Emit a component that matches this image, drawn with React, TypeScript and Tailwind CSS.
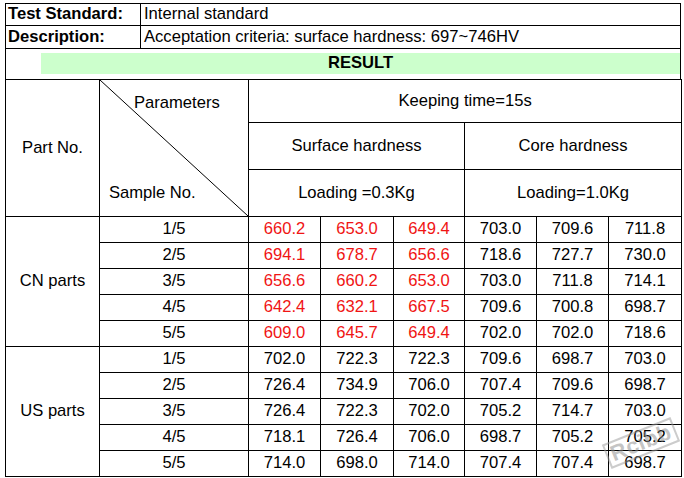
const CN = [
  { s: "1/5", surf: ["660.2", "653.0", "649.4"], core: ["703.0", "709.6", "711.8"] },
  { s: "2/5", surf: ["694.1", "678.7", "656.6"], core: ["718.6", "727.7", "730.0"] },
  { s: "3/5", surf: ["656.6", "660.2", "653.0"], core: ["703.0", "711.8", "714.1"] },
  { s: "4/5", surf: ["642.4", "632.1", "667.5"], core: ["709.6", "700.8", "698.7"] },
  { s: "5/5", surf: ["609.0", "645.7", "649.4"], core: ["702.0", "702.0", "718.6"] },
];

const US = [
  { s: "1/5", surf: ["702.0", "722.3", "722.3"], core: ["709.6", "698.7", "703.0"] },
  { s: "2/5", surf: ["726.4", "734.9", "706.0"], core: ["707.4", "709.6", "698.7"] },
  { s: "3/5", surf: ["726.4", "722.3", "702.0"], core: ["705.2", "714.7", "703.0"] },
  { s: "4/5", surf: ["718.1", "726.4", "706.0"], core: ["698.7", "705.2", "705.2"] },
  { s: "5/5", surf: ["714.0", "698.0", "714.0"], core: ["707.4", "707.4", "698.7"] },
];

const td = "border border-black text-center p-0";

function Group({ name, rows, red }: { name: string; rows: typeof CN; red: boolean }) {
  return (
    <>
      {rows.map((r, i) => (
        <tr key={r.s} className="h-[26px]">
          {i === 0 && (
            <td rowSpan={5} className={td}>
              {name}
            </td>
          )}
          <td className={td}>{r.s}</td>
          {r.surf.map((v, j) => (
            <td key={"s" + j} className={`${td} ${red ? "text-[#f01414]" : ""}`}>
              {v}
            </td>
          ))}
          {r.core.map((v, j) => (
            <td key={"c" + j} className={td}>
              {v}
            </td>
          ))}
        </tr>
      ))}
    </>
  );
}

export default function App() {
  return (
    <div
      className="relative w-[684px] h-[478px] bg-white text-black text-[16.6px] leading-none overflow-hidden"
      style={{ fontFamily: '"Liberation Sans", Arial, sans-serif' }}
    >
      <div className="ml-[5px] pt-[3px] w-[676px]">
        {/* header info */}
        <div className="border-x border-t border-black">
          <div className="flex h-[21px]">
            <div className="w-[135px] border-r border-black pl-[2px] font-bold flex items-center">Test Standard:</div>
            <div className="pl-[3px] flex items-center">Internal standard</div>
          </div>
          <div className="flex h-[23px] border-t border-black">
            <div className="w-[135px] border-r border-black pl-[2px] font-bold flex items-center">Description:</div>
            <div className="pl-[3px] flex items-center">Acceptation criteria: surface hardness: 697~746HV</div>
          </div>
          <div className="h-[31px] border-t border-black pt-[4px] pl-[35px]">
            <div className="h-[21px] bg-[#ccffcc] font-bold flex items-center justify-center">RESULT</div>
          </div>
        </div>

        <table className="table-fixed border-collapse w-[676px]">
          <colgroup>
            <col className="w-[94px]" />
            <col className="w-[149px]" />
            <col className="w-[72px]" />
            <col className="w-[73px]" />
            <col className="w-[71px]" />
            <col className="w-[72px]" />
            <col className="w-[72px]" />
            <col className="w-[73px]" />
          </colgroup>
          <tbody>
            <tr className="h-[43px]">
              <td rowSpan={3} className={td}>
                Part No.
              </td>
              <td rowSpan={3} className="border border-black p-0 relative">
                <svg className="absolute inset-0 w-full h-full" viewBox="0 0 100 100" preserveAspectRatio="none">
                  <line x1="0" y1="0" x2="100" y2="100" stroke="black" strokeWidth="1" vectorEffect="non-scaling-stroke" />
                </svg>
                <div className="relative h-[136px] flex flex-col justify-between pt-[15px] pb-[14px]">
                  <div className="pl-[34px]">Parameters</div>
                  <div className="pl-[9px]">Sample No.</div>
                </div>
              </td>
              <td colSpan={6} className={td}>
                Keeping time=15s
              </td>
            </tr>
            <tr className="h-[47px]">
              <td colSpan={3} className={td}>
                Surface hardness
              </td>
              <td colSpan={3} className={td}>
                Core hardness
              </td>
            </tr>
            <tr className="h-[47px]">
              <td colSpan={3} className={td}>
                Loading =0.3Kg
              </td>
              <td colSpan={3} className={td}>
                Loading=1.0Kg
              </td>
            </tr>
            <Group name="CN parts" rows={CN} red />
            <Group name="US parts" rows={US} red={false} />
          </tbody>
        </table>
      </div>

      {/* stamp watermark */}
      <div className="absolute left-[604px] top-[430px] -rotate-[22deg] border-2 border-[#9a9a9a]/50 px-[3px] text-[22px] font-bold text-[#8a8a8a]/50 tracking-wide">
        Rcibb
      </div>
    </div>
  );
}
